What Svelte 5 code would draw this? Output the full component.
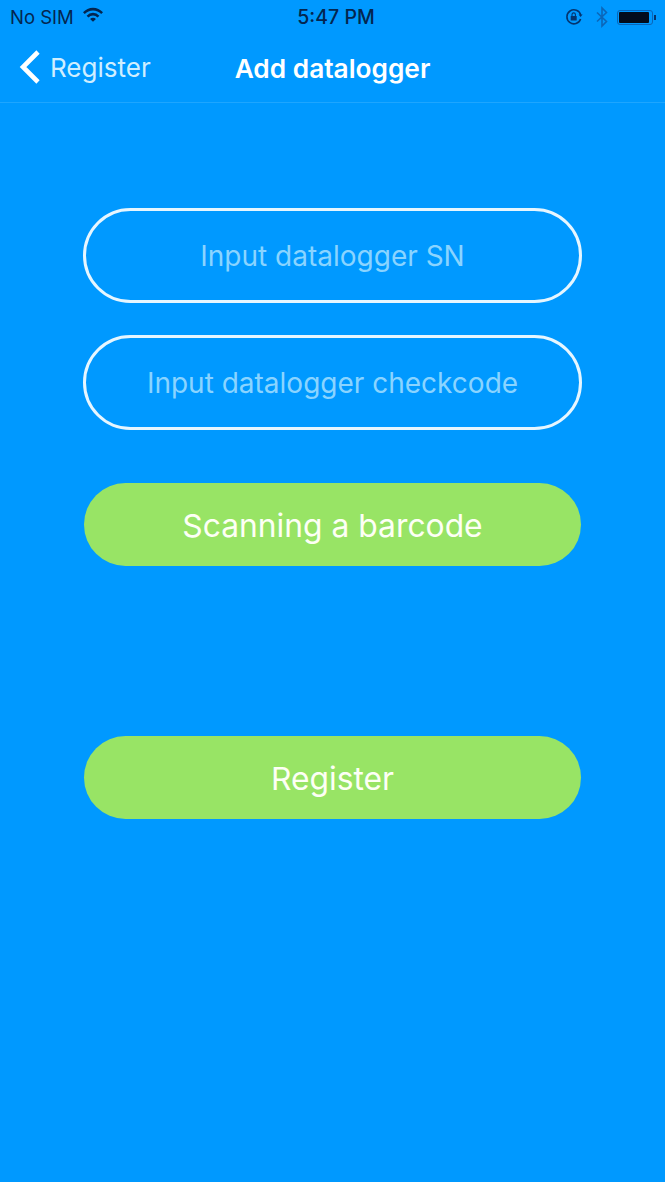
<script>
  let sn = $state('');
  let checkcode = $state('');
</script>

<main class="page">
  <div class="status">
    <div class="status-left">
      <span>No SIM</span>
      <svg class="wifi" width="20" height="15" viewBox="0 0 22 16">
        <path d="M0 5.400a15 15 0 0 1 22 0l-2 2.100a12.200 12.200 0 0 0-18 0z" fill="#04264f"/>
        <path d="M4 9.300a9.400 9.400 0 0 1 14 0l-2 2.100a6.600 6.600 0 0 0-10 0z" fill="#04264f"/>
        <path d="M7.800 12.900a4.400 4.400 0 0 1 6.400 0L11 16z" fill="#04264f"/>
      </svg>
    </div>
    <div class="clock">5:47 PM</div>
    <div class="status-right">
      <svg width="20" height="20" viewBox="0 0 20 20" fill="none">
        <path d="M16.600 12a7 7 0 1 1 .1-4" stroke="#04346e" stroke-width="1.600"/>
        <path d="M14.600 7.400h4l-2 2.600z" fill="#04346e"/>
        <rect x="6.700" y="9" width="6" height="4.600" rx=".6" fill="#04346e"/>
        <path d="M8 9V7.600a1.700 1.700 0 0 1 3.400 0V9" stroke="#04346e" stroke-width="1.100"/>
      </svg>
      <svg class="bt" width="14" height="22" viewBox="0 0 14 22" fill="none">
        <path d="M2 6.500 11.500 15.500 7 20V2l4.500 4.500L2 15.500" stroke="#0b66b8" stroke-width="1.600"/>
      </svg>
      <div class="battery"><div class="cell"></div></div>
      <div class="nub"></div>
    </div>
  </div>

  <nav class="navbar">
    <div class="back">
      <svg width="22" height="34" viewBox="0 0 22 34" fill="none">
        <path d="M19 2 4 17l15 15" stroke="#fff" stroke-width="4.600"/>
      </svg>
      <span>Register</span>
    </div>
    <h1>Add datalogger</h1>
  </nav>

  <form class="form" onsubmit={(e) => e.preventDefault()}>
    <div class="fields">
      <input bind:value={sn} placeholder="Input datalogger SN" />
      <input bind:value={checkcode} placeholder="Input datalogger checkcode" />
    </div>
    <button type="button" class="btn scan">Scanning a barcode</button>
    <button type="submit" class="btn">Register</button>
  </form>
</main>

<style>
  :global(body) {
    margin: 0;
    background: #0099ff;
  }

  .page {
    min-height: 1182px;
    background: #0099ff;
    font-family: Inter, "Liberation Sans", sans-serif;
    color: #fff;
  }

  .status {
    height: 34px;
    padding: 0 3px 0 10px;
    display: grid;
    grid-template-columns: 1fr auto 1fr;
    align-items: center;
    color: #04264f;
    font-size: 18.500px;
  }

  .status-left {
    display: flex;
    align-items: center;
    gap: 9px;
  }

  .wifi {
    margin-top: -5px;
  }

  .clock {
    font-weight: 500;
    font-size: 19.500px;
  }

  .status-right {
    display: flex;
    align-items: center;
    justify-content: flex-end;
  }

  .bt {
    margin: 0 8px 0 11px;
  }

  .battery {
    width: 36px;
    height: 15px;
    padding: 1px 3px 1px 1px;
    box-sizing: border-box;
    border: 1px solid #0b66b8;
    border-radius: 3px;
  }

  .cell {
    height: 100%;
    background: #020c1c;
    border-radius: 1px;
  }

  .nub {
    width: 2px;
    height: 5px;
    margin-left: 1px;
    margin-right: 6px;
    background: #04346e;
  }

  .navbar {
    position: relative;
    height: 68px;
    border-bottom: 1px solid #1ea6ff;
    display: flex;
    align-items: center;
    justify-content: center;
  }

  .back {
    position: absolute;
    left: 19px;
    top: 16px;
    display: flex;
    align-items: center;
    gap: 9px;
    font-size: 26px;
    color: #cfeeff;
  }

  h1 {
    margin: 0;
    font-size: 26.250px;
    font-weight: 600;
  }

  .form {
    padding: 105px 83px 0;
    display: flex;
    flex-direction: column;
  }

  .fields {
    display: flex;
    flex-direction: column;
    gap: 32px;
  }

  input {
    box-sizing: border-box;
    width: 100%;
    height: 95px;
    padding: 0 20px;
    background: transparent;
    border: 3px solid #e6f6ff;
    border-radius: 48px;
    outline: none;
    color: #fff;
    font: 400 28px Inter, "Liberation Sans", sans-serif;
    text-align: center;
  }

  input::placeholder {
    color: #8ad4ff;
    opacity: 1;
  }

  .btn {
    height: 83px;
    margin: 170px 1px 0;
    padding: 2px 0 0;
    background: #98e465;
    border: 0;
    border-radius: 42px;
    color: #fdfff5;
    font: 400 31.800px Inter, "Liberation Sans", sans-serif;
  }

  .btn.scan {
    margin-top: 53px;
  }
</style>
